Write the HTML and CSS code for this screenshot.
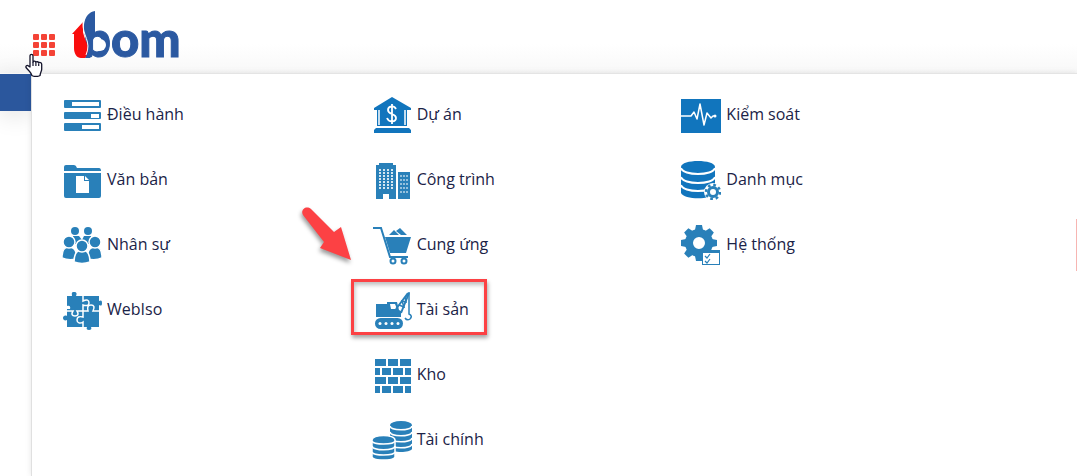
FILE: index.html
```html
<!DOCTYPE html>
<html lang="vi">
<head>
<meta charset="utf-8">
<title>1bom</title>
<link rel="stylesheet" href="styles.css">
</head>
<body>
<header class="header">
  <button class="apps" type="button" aria-label="Menu">
    <svg class="apps-icon" viewBox="0 0 22 22" width="22" height="22"><g fill="#f44336"><rect width="6" height="6" rx="1"/><rect x="8" width="6" height="6" rx="1"/><rect x="16" width="6" height="6" rx="1"/><rect y="8" width="6" height="6" rx="1"/><rect x="8" y="8" width="6" height="6" rx="1"/><rect x="16" y="8" width="6" height="6" rx="1"/><rect y="16" width="6" height="6" rx="1"/><rect x="8" y="16" width="6" height="6" rx="1"/><rect x="16" y="16" width="6" height="6" rx="1"/></g></svg>
    <svg class="cursor" viewBox="0 0 18 24" width="18" height="24"><path d="M5 14V3c0-2.200 3-2.200 3 0v6c.4-1.300 2.700-1 2.900.3.500-1 2.600-.7 2.800.6.600-.8 3-.5 3 1.300v5c0 2-1.400 3.300-1.600 6.300-2 1.300-6.300 1.300-8.300 0C6.500 20 4.500 18.500 1.200 14.800c-1-1.700.9-3 2.200-1.900z" fill="#fff" stroke="#14142b" stroke-width="1.300" stroke-linejoin="round"/><path d="M8 9v4M10.900 9.500V13M13.700 10.500V13" stroke="#14142b" stroke-width="1.200"/></svg>
  </button>
  <a class="logo" href="#" aria-label="1bom">
    <svg viewBox="0 -6 116 66" width="116" height="66">
      <text class="wordmark" x="11" y="46">bom</text>
      <path d="M23 0v24l-4 10-1 13h-5c5-7 5-12 1-19C10 18 11 2 23 0z" fill="#2b59a1"/>
      <circle cx="28" cy="34" r="6" fill="#fff"/>
      <path d="M0 23 11 11v10c2 10 9 16 2 26H9C5 47 2 43 2 37V23z" fill="#f90d0d"/>
      <path d="M11 11c-1 14 9 19 3 33" fill="none" stroke="#fff" stroke-width="1"/>
    </svg>
  </a>
</header>
<main class="page">
  <aside class="rail"><div class="rail-bar"></div></aside>
  <nav class="panel">
    <ul class="menu">
      <li><a class="item" href="#"><svg class="icon" viewBox="0 0 40 40"><rect x="2" y="5" width="37" height="8" rx="1"/><rect x="2" y="17" width="37" height="7" rx="1"/><rect x="2" y="28" width="37" height="8" rx="1"/><path class="cut" d="M10 7h27v4H10zM29 19h8v4h-8zM20 30h17v4H20z"/></svg><span class="label">Điều hành</span></a></li>
      <li><a class="item" href="#"><svg class="icon" viewBox="0 0 40 40"><path d="M2 11V7q0-2 2-2h8q2 0 3 3h22q2 0 2 3zM2 13h37v23q0 2-2 2H4q-2 0-2-2z"/><path class="cut" d="M14 16h8v5h5v12H14zM23 16l4 4h-4z"/></svg><span class="label">Văn bản</span></a></li>
      <li><a class="item" href="#"><svg class="icon" viewBox="0 0 40 40"><circle cx="13" cy="6" r="4"/><circle cx="26" cy="6" r="4"/><path d="M11 11h6l3 4-4 4h-4zM22 11h7v8h-5l-4-4z"/><g class="edge"><path d="M0 33c0-8 2-11 7-11s8 3 8 12q-9 2-15-1zM40 33c0-8-2-11-7-11s-8 3-8 12q9 2 15-1z"/><circle cx="7" cy="17" r="6"/><circle cx="33" cy="17" r="6"/><path d="M12 37c0-9 3-12 8-12s8 3 8 12q-8 3-16 0z"/><circle cx="20" cy="21" r="6"/></g></svg><span class="label">Nhân sự</span></a></li>
      <li><a class="item" href="#"><svg class="icon" viewBox="0 0 40 40"><path d="M5 6h5c0-2-1-4 2-4s3 2 2 4h23v5c2-1 3-1 3 2s-1 3-3 2v22h-8c1 2 0 3-2 3s-3-1-2-3H5v-7c-2 1-4 0-4-2s2-3 4-2v-7h3c1-3-1-4-3-3z"/><g class="line"><path d="M21 6v5c4-2 6-1 6 2s-3 3-6 2v6h5c-1-4 0-6 3-6s4 2 2 6h6M21 21h-6c2 3 1 5-2 5s-4-2-2-5H5M21 21v6c-4-1-6 0-6 3s3 4 6 2v6"/></g></svg><span class="label">WebIso</span></a></li>
    </ul>
    <ul class="menu">
      <li><a class="item deep" href="#"><svg class="icon" viewBox="0 0 40 40"><path d="M20 2 39 13v2h-4v16H5V15H2v-2zM4 33h33l2 2v3H2v-3z"/><path d="M7 15v15M33 15v15" class="line"/><path d="M24 14c-2-4-8-3-8 1 0 5 8 3 8 8 0 4-7 5-9 0M20 9v20" fill="none" stroke="#fff" stroke-width="1.800"/></svg><span class="label">Dự án</span></a></li>
      <li><a class="item" href="#"><svg class="icon" viewBox="0 0 40 40"><path d="M4 5h3V3h14v2h3v34h-7v-5h-6v5H4zM26 12h12v27H26z"/><path d="M8 9v21M12 9v21M16 9v21M20 9v21" fill="none" stroke="#fff" stroke-width="2" stroke-dasharray="2 1" opacity=".8"/><path d="M29 15v19M32 15v19M35 15v19" fill="none" stroke="#fff" stroke-dasharray="2 2"/></svg><span class="label">Công trình</span></a></li>
      <li><a class="item" href="#"><svg class="icon" viewBox="0 0 40 40"><path d="M13 12h26l-5 16H18z"/><path d="m17 10 5-5 5 5zM24 6l4-3 7 7h-6z"/><path d="M1 3h8l9 29h18" fill="none" stroke="#2980b9" stroke-width="2"/><g fill="#fff" stroke="#2980b9" stroke-width="2"><circle cx="21" cy="36" r="2.500"/><circle cx="32" cy="36" r="2.500"/></g></svg><span class="label">Cung ứng</span></a></li>
      <li><a class="item marked" href="#"><svg class="icon" viewBox="0 0 40 40"><path d="M4 14h11v-2h10l2 8 2 1v6H4z"/><path class="cut" d="M18 14h5l2 5h-6z"/><path d="M24 19 36 3M29 23 37 3" fill="none" stroke="#2980b9" stroke-width="2"/><path d="m27 15 5 2-2-6 4 1-1-5M37 2v22q4 2 1 5-3 2-5-1" fill="none" stroke="#2980b9" stroke-width="1.500"/><rect x="3" y="28" width="28" height="11" rx="5.500"/><g class="cut"><circle cx="8" cy="33.500" r="1.500"/><circle cx="14" cy="33.500" r="1.500"/><circle cx="20" cy="33.500" r="1.500"/><circle cx="26" cy="33.500" r="1.500"/></g></svg><span class="label">Tài sản</span></a></li>
      <li><a class="item" href="#"><svg class="icon" viewBox="0 0 40 40"><path d="M3 4h11v7H3zM16 4h10v7H16zM28 4h11v7H28zM3 13h5v7H3zM10 13h9v7h-9zM21 13h10v7H21zM33 13h6v7h-6zM3 22h11v7H3zM16 22h10v7H16zM28 22h11v7H28zM3 31h5v7H3zM10 31h9v7h-9zM21 31h10v7H21zM33 31h6v7h-6z"/></svg><span class="label">Kho</span></a></li>
      <li><a class="item" href="#"><svg class="icon" viewBox="0 0 40 40"><path d="M18 5v24c2 4 20 4 22 0V5z"/><ellipse cx="29" cy="5" rx="11" ry="4"/><path class="line" d="M18 6c1 5 21 5 22 0M18 12c1 5 21 5 22 0M18 18c1 5 21 5 22 0M18 24c1 5 21 5 22 0"/><g class="edge"><path d="M0 20c0-6 23-6 23 0v17c-2 4-21 4-23 0z"/></g><path class="line" d="M0 21c1 4 22 4 23 0M0 26c1 5 22 5 23 0M0 32c1 4 22 4 23 0"/></svg><span class="label">Tài chính</span></a></li>
    </ul>
    <ul class="menu">
      <li><a class="item deep" href="#"><svg class="icon" viewBox="0 0 40 40"><path d="M0 4h40v34H0z"/><path d="M0 21h10l3-4 3 7 3-15 4 21 3-12 4 5 2-2h3" fill="none" stroke="#fff" stroke-width="1.500" stroke-linejoin="round"/><circle class="cut" cx="34" cy="21" r="1.500"/></svg><span class="label">Kiểm soát</span></a></li>
      <li><a class="item deep" href="#"><svg class="icon" viewBox="0 0 40 40"><path d="M0 7c0-8 34-8 34 0v26c-3 7-31 7-34 0z"/><path d="M0 8c2 8 32 8 34 0M0 17c2 8 32 8 34 0M0 25c2 8 32 8 34 0" fill="none" stroke="#fff" stroke-width="2"/><circle class="cut" cx="32" cy="32" r="9"/><circle cx="32" cy="32" r="4.500" fill="none" stroke="#2980b9" stroke-width="3"/><circle cx="32" cy="32" r="7" fill="none" stroke="#2980b9" stroke-width="2.500" stroke-dasharray="2.700 2.800"/></svg><span class="label">Danh mục</span></a></li>
      <li><a class="item" href="#"><svg class="icon" viewBox="0 0 40 40"><circle cx="18" cy="18" r="10" fill="none" stroke="#2980b9" stroke-width="8"/><g><path id="tooth" d="M14 5 15 0h6l1 5z"/><use href="#tooth" transform="rotate(45 18 18)"/><use href="#tooth" transform="rotate(90 18 18)"/><use href="#tooth" transform="rotate(135 18 18)"/><use href="#tooth" transform="rotate(180 18 18)"/><use href="#tooth" transform="rotate(225 18 18)"/><use href="#tooth" transform="rotate(270 18 18)"/><use href="#tooth" transform="rotate(315 18 18)"/></g><rect x="21.500" y="25.500" width="17" height="14" fill="#fff" stroke="#2980b9"/><path d="M21 25h18v3H21z"/><path d="m24 31 2 2 3-4M24 36l2 2 3-4" fill="none" stroke="#2980b9" stroke-width="1.200"/></svg><span class="label">Hệ thống</span></a></li>
    </ul>
    <div class="edge-tab"></div>
    <svg class="arrow" viewBox="0 0 60 66" width="60" height="66"><path d="M3 14C0 9 6 4 11 8L34 31l7-5 10 33-31-12 4-6z"/></svg>
  </nav>
</main>
</body>
</html>
```
FILE: styles.css
```css
* { box-sizing: border-box; }
body {
  margin: 0;
  min-height: 100vh;
  display: flex;
  flex-direction: column;
  overflow: hidden;
  background: #fff;
  color: #1b2347;
  font: 16px/24px "Open Sans", "Noto Sans", sans-serif;
}
.header {
  height: 73px;
  flex: none;
  display: flex;
  align-items: flex-start;
  gap: 17px;
  padding: 5px 32px 0;
  background: linear-gradient(#fff 60%, #f8f8f8);
}
.apps {
  position: relative;
  width: 23px;
  margin-top: 29px;
  padding: 0;
  border: 0;
  background: none;
}
.apps-icon { display: block; margin-left: 1px; }
.cursor { position: absolute; left: -7px; top: 19px; z-index: 2; }
.logo { display: block; }
.logo svg { display: block; overflow: visible; }
.wordmark {
  font: 900 49px Lato, sans-serif;
  fill: #2b59a1;
  stroke: #2b59a1;
  stroke-width: 1px;
}
.page { flex: 1; display: flex; }
.rail {
  width: 31px;
  flex: none;
  padding-top: 1px;
}
.rail-bar {
  height: 37px;
  background: #2b579d;
  box-shadow: 0 4px 24px rgba(0, 0, 0, .12);
}
.panel {
  position: relative;
  flex: 1;
  display: grid;
  grid-template-columns: repeat(3, 1fr);
  align-items: start;
  padding: 21px 86px 16px 30px;
  background: #fff;
  border-top: 1px solid #e4e4e4;
  border-left: 1px solid #e0e0e0;
  box-shadow: 0 0 6px rgba(0, 0, 0, .1);
}
.menu {
  margin: 0;
  padding: 0;
  list-style: none;
  display: grid;
  gap: 25px;
}
.item {
  position: relative;
  display: inline-flex;
  align-items: center;
  gap: 5px;
  color: inherit;
  text-decoration: none;
  vertical-align: top;
}
.label { padding-bottom: 2px; }
.icon { width: 40px; height: 40px; flex: none; fill: #2980b9; }
.deep .icon { fill: #1175bd; }
.icon .cut { fill: #fff; }
.line { fill: none; stroke: #fff; stroke-width: 1.5px; }
.edge { stroke: #fff; stroke-width: 1.5px; }
.marked::after {
  content: "";
  position: absolute;
  inset: -11px -18px -5px -21px;
  border: 3px solid #fc4144;
  box-shadow: 1px 3px 4px rgba(0, 0, 0, .35), inset 1px 3px 4px rgba(0, 0, 0, .25);
}
.arrow {
  position: absolute;
  left: 268px;
  top: 127px;
  fill: #fc4144;
  filter: drop-shadow(-1px 3px 2px rgba(0, 0, 0, .4));
  overflow: visible;
}
.edge-tab {
  position: absolute;
  right: 0;
  top: 145px;
  width: 1px;
  height: 52px;
  background: #f7b5b2;
}
```
